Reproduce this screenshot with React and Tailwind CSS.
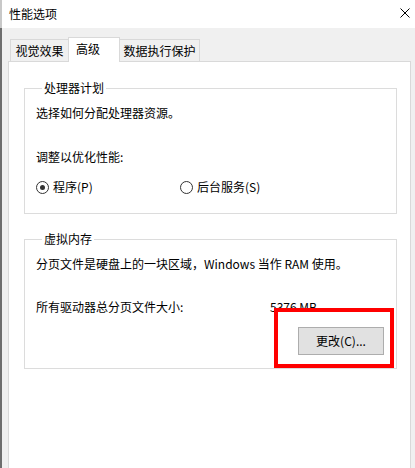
const Radio = ({ checked, label }) => (
    <div className="flex items-center">
        <span className="w-[13px] h-[13px] rounded-full border border-[#333333] bg-white flex items-center justify-center">
            {checked && <span className="w-[5px] h-[5px] rounded-full bg-[#333333]" />}
        </span>
        <span className="ml-[4px]">{label}</span>
    </div>
);

const Group = ({ title, children, className = '' }) => (
    <fieldset className={`relative border border-[#dcdcdc] ml-[15px] mr-[13px] pl-[11px] ${className}`}>
        <legend className="ml-[6px] px-[2px] leading-[16px]">{title}</legend>
        {children}
    </fieldset>
);

const App = () => {
    return (
        <div className="w-[415px] h-[468px] flex bg-white text-[12px] leading-[16px] text-black font-['Noto_Sans_CJK_SC',sans-serif] overflow-hidden">
            <div className="w-[2px] flex flex-col">
                <div className="h-[28px] bg-[#c8c8c8]" />
                <div className="flex-1 bg-[#6e6e6e]" />
            </div>

            <div className="flex-1 flex flex-col">
                {/* title bar */}
                <div className="h-[28px] bg-white flex items-center justify-between pl-[7px] pr-[5px]">
                    <span>性能选项</span>
                    <svg width="10" height="10" viewBox="0 0 10 10" className="mt-[-2px]">
                        <path d="M0.5 0.5 L9.5 9.5 M9.5 0.5 L0.5 9.5" stroke="#000" strokeWidth="1" />
                    </svg>
                </div>

                <div className="flex-1 flex flex-col bg-[#f0f0f0] pt-[9px] pl-[6px] pr-[4px]">
                    {/* tabs */}
                    <div className="flex items-end pl-[2px] h-[24px]">
                        <div className="w-[59px] h-[22px] border border-b-0 border-[#d9d9d9] bg-[#f0f0f0] flex items-center justify-center">
                            视觉效果
                        </div>
                        <div className="relative z-10 -ml-px mb-[-1px] w-[52px] h-[25px] border border-b-0 border-[#d9d9d9] bg-white pl-[7px] pt-[3px]">
                            高级
                        </div>
                        <div className="-ml-px w-[81px] h-[22px] border border-b-0 border-[#d9d9d9] bg-[#f0f0f0] flex items-center justify-center">
                            数据执行保护
                        </div>
                    </div>

                    {/* panel */}
                    <div className="flex-1 bg-white border border-b-0 border-[#d9d9d9]">
                        <Group title="处理器计划" className="mt-[18px] pb-[18px]">
                            <div className="mt-[9px]">选择如何分配处理器资源。</div>
                            <div className="mt-[28px]">调整以优化性能:</div>
                            <div className="mt-[14px] flex">
                                <div className="w-[144px]">
                                    <Radio checked label="程序(P)" />
                                </div>
                                <Radio label="后台服务(S)" />
                            </div>
                        </Group>

                        <Group title="虚拟内存" className="mt-[17px] pb-[13px]">
                            <div className="mt-[9px]">分页文件是硬盘上的一块区域，Windows 当作 RAM 使用。</div>
                            <div className="mt-[27px] flex">
                                <span className="w-[234px]">所有驱动器总分页文件大小:</span>
                                <span>5376 MB</span>
                            </div>
                            <div className="mt-[12px] flex justify-end pr-[12px]">
                                <button className="w-[86px] h-[28px] bg-[#e1e1e1] border border-[#adadad] flex items-center justify-center">
                                    更改(C)...
                                </button>
                            </div>
                            <div className="absolute left-[249px] top-[61px] w-[120px] h-[60px] border-4 border-[#ff0000]" />
                        </Group>
                    </div>
                </div>
            </div>
        </div>
    );
};

export default App;
